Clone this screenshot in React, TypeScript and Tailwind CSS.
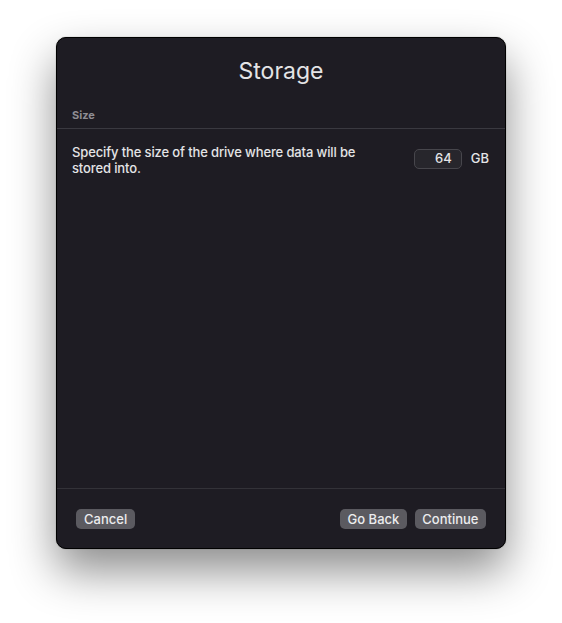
export default function App() {
  return (
    <div className="min-h-screen w-full bg-white pt-[37px] font-['Inter',sans-serif]">
      <div className="mx-auto flex h-[512px] w-[450px] flex-col rounded-[10px] border border-black bg-[#1e1c23] shadow-[0_22px_45px_rgba(0,0,0,0.45),0_0_1px_rgba(0,0,0,0.6)]">
        {/* Title */}
        <h1 className="pt-[18px] text-center text-[23px] leading-[30px] text-[#e4e4e6]">Storage</h1>

        {/* Section header */}
        <div className="mt-[23px] px-[15px] text-[11px] font-bold leading-[13px] text-[#8e8d93]">Size</div>
        <div className="mt-[6px] h-px bg-[#3a3940]" />

        {/* Content */}
        <div className="flex items-start justify-between pl-[15px] pr-[16px] pt-[15px]">
          <p className="w-[300px] text-[13px] font-medium leading-[16px] tracking-[-0.01em] text-[#e4e4e6]">
            Specify the size of the drive where data will be stored into.
          </p>
          <div className="mt-[5px] flex items-center gap-[9px]">
            <div className="flex h-[20px] w-[48px] items-center justify-end rounded-[5px] border border-[#47464c] bg-[#27262c] pr-[9px] text-[13px] font-medium text-[#e4e4e6]">
              64
            </div>
            <span className="text-[13px] font-medium text-[#e4e4e6]">GB</span>
          </div>
        </div>

        <div className="flex-1" />

        {/* Footer */}
        <div className="h-px bg-[#333238]" />
        <div className="flex items-center justify-between px-[19px] pb-[19px] pt-[20px]">
          <button className="h-[20px] rounded-[5px] bg-[#5b5a60] px-[8px] text-[13px] font-medium leading-[20px] text-[#ececee]">
            Cancel
          </button>
          <div className="flex gap-[8px]">
            <button className="h-[20px] rounded-[5px] bg-[#5b5a60] px-[7.5px] text-[13px] font-medium leading-[20px] text-[#ececee]">
              Go Back
            </button>
            <button className="h-[20px] rounded-[5px] bg-[#5b5a60] px-[7.5px] text-[13px] font-medium leading-[20px] text-[#ececee]">
              Continue
            </button>
          </div>
        </div>
      </div>
    </div>
  )
}
